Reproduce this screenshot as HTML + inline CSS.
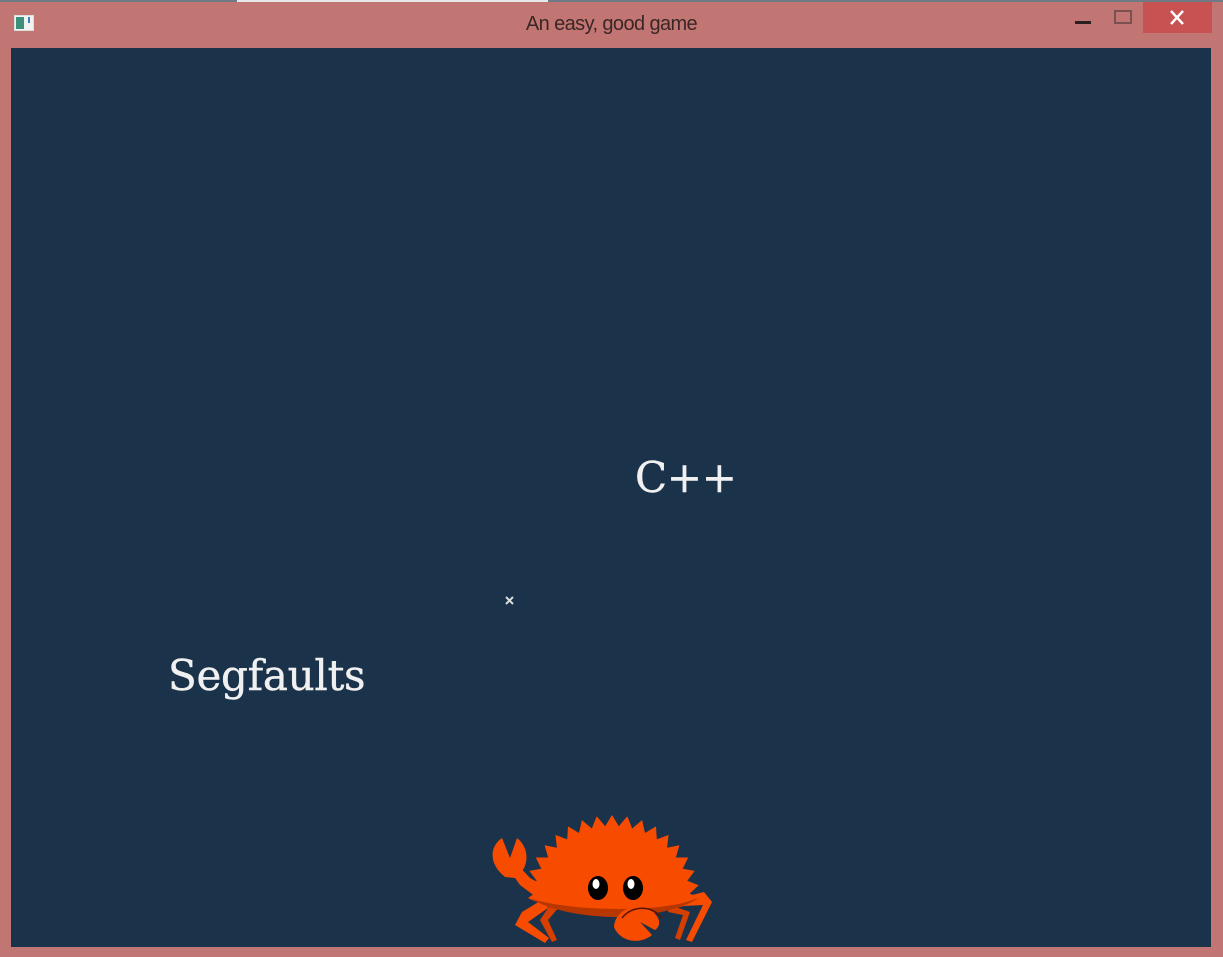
<!DOCTYPE html>
<html><head><meta charset="utf-8"><style>
html,body{margin:0;padding:0;width:1223px;height:957px;overflow:hidden;background:#c27674;position:relative;font-family:"Liberation Sans",sans-serif}
.topline{position:absolute;left:0;top:0;width:1223px;height:2px;background:#6f7a86}
.topline2{position:absolute;left:237px;top:0;width:311px;height:2px;background:#e8e8e8}
.title{position:absolute;left:0;width:1223px;top:13px;text-align:center;font-size:20px;color:#3b2626;letter-spacing:-0.6px}
.game{position:absolute;left:11px;top:48px;width:1200px;height:899px;background:#1b324b;overflow:hidden}
.t{position:absolute;font-family:"DejaVu Serif","Liberation Serif",serif;color:#f0f0f0;font-size:42px;letter-spacing:-0.3px;line-height:1;-webkit-text-stroke:0.4px #f0f0f0}
</style></head><body>
<div class="topline"></div><div class="topline2"></div>
<div style="position:absolute;left:14px;top:15px;width:20px;height:16px;background:#f2f2f2;border:1px solid #ddd;box-sizing:border-box"></div>
<div style="position:absolute;left:16px;top:17px;width:8px;height:12px;background:#3e8f7a"></div>
<div style="position:absolute;left:28px;top:17px;width:2px;height:6px;background:#3a7fc0"></div>
<div class="title">An easy, good game</div>
<div style="position:absolute;left:1075px;top:21px;width:16px;height:3px;background:#2a2020"></div>
<div style="position:absolute;left:1114px;top:10px;width:18px;height:14px;border:2px solid #7a5050;box-sizing:border-box"></div>
<div style="position:absolute;left:1143px;top:2px;width:69px;height:31px;background:#c85251"></div>
<svg style="position:absolute;left:1143px;top:2px" width="69" height="31"><path d="M28 9 L40 22 M40 9 L28 22" stroke="#fff" stroke-width="2.4"/></svg>
<div class="game">
  <div class="t" style="left:624px;top:409px">C++</div>
  <div class="t" style="left:157px;top:607px">Segfaults</div>
  <svg style="position:absolute;left:493px;top:547px" width="12" height="12"><path d="M2 2L9 9M9 2L2 9" stroke="#ddd" stroke-width="2"/></svg>
</div>
<svg style="position:absolute;left:0;top:0" width="1223" height="957">
  <defs><clipPath id="c"><rect x="11" y="48" width="1200" height="899"/></clipPath></defs>
  <g clip-path="url(#c)" fill="#f74c00" stroke="none">
    <path d="M545 898 L522 912 L515 925 L545 943 L549 938 L528 922 L548 908Z"/>
    <path d="M552 902 L540 920 L552 942 L557 940 L548 920 L560 906Z" fill="#d63f00"/>
    <path d="M680 898 L704 892 L712 902 L692 942 L686 940 L703 905 L684 906Z"/>
    <path d="M670 905 L690 912 L680 940 L675 938 L683 915 L668 912Z" fill="#d63f00"/>
    <path d="M540 900 L520 885 L508 868 L515 862 L530 878 L548 888Z"/>
    <path d="M505 877 C490 865 488 848 502 838 L510 858 L517 838 C530 848 530 868 515 878Z"/>
    <path d="M525.3,885.2 L536.7,880.8 L529.3,870.9 L541.3,868.7 L535.8,857.5 L548.1,857.5 L544.6,845.3 L556.9,847.7 L555.4,834.9 L567.2,839.4 L568,826.4 L579,833 L581.9,820.1 L591.8,828.5 L596.7,816.3 L605.2,826.3 L612,815 L618.8,826.3 L627.3,816.3 L632.2,828.5 L642.1,820.1 L645,833 L656,826.4 L656.8,839.4 L668.6,834.9 L667.1,847.7 L679.4,845.3 L675.9,857.5 L688.2,857.5 L682.7,868.7 L694.7,870.9 L687.3,880.8 L698.7,885.2 L689.7,893.6 L700,898 C690,908 650,915 612,914 C575,913 540,905 528,898 L534.3,893.6Z"/>
    <path d="M530 898 C560 910 660 915 698 898 C690 906 650 918 612 917 C575 916 545 908 530 898Z" fill="#b83600"/>
    <path d="M614 927 C615 910 635 902 650 910 C660 916 662 925 655 930 L640 922 L652 935 C640 945 620 942 614 927Z"/>
    <path d="M622 918 C632 905 652 905 662 918" stroke="#5a1500" stroke-width="1.5" fill="none"/>
    <ellipse cx="598" cy="888" rx="10" ry="12" fill="#000"/>
    <ellipse cx="633" cy="888" rx="10" ry="12" fill="#000"/>
    <ellipse cx="596" cy="884" rx="3.5" ry="5" fill="#fff"/>
    <ellipse cx="631" cy="884" rx="3.5" ry="5" fill="#fff"/>
  </g>
</svg>
</body></html>
